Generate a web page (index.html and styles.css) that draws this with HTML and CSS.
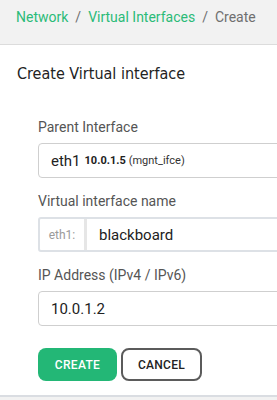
FILE: index.html
```html
<!DOCTYPE html>
<html>
<head>
	<title>Create Virtual interface</title>
	<link rel="stylesheet" href="styles.css">
</head>
<body>
	<div class="crumbs">
		<a href="#">Network</a>
		<span class="sep">/</span>
		<a href="#">Virtual Interfaces</a>
		<span class="sep">/</span>
		<span class="current">Create</span>
	</div>

	<div class="panel">
		<h2 class="title">Create Virtual interface</h2>

		<form class="form">
			<label class="label">Parent Interface</label>
			<div class="field">
				<span class="iface">eth1</span>
				<b class="addr">10.0.1.5</b>
				<span class="tag">(mgnt_ifce)</span>
			</div>

			<label class="label">Virtual interface name</label>
			<div class="group">
				<span class="addon">eth1:</span>
				<input type="text" class="group-input" value="blackboard">
			</div>

			<label class="label">IP Address (IPv4 / IPv6)</label>
			<input type="text" class="field text" value="10.0.1.2">

			<div class="buttons">
				<button type="button" class="btn btn-create">CREATE</button>
				<button type="button" class="btn btn-cancel">CANCEL</button>
			</div>
		</form>
	</div>
</body>
</html>
```

FILE: styles.css
```css
html, body {
	margin: 0;
	padding: 0;
	background: #f2f2f2;
	overflow: hidden;
	font-family: Roboto, "Liberation Sans", sans-serif;
}

.crumbs {
	height: 45px;
	padding: 0 16px 10px;
	display: flex;
	align-items: center;
	gap: 7px;
	font-size: 14px;
	border-bottom: 1px solid #dcdcdc;
	box-sizing: border-box;
	white-space: nowrap;
}

.crumbs a {
	color: #2bbb78;
	text-decoration: none;
}

.crumbs .sep,
.crumbs .current {
	color: #6f6f6f;
}

.panel {
	background: #fff;
	border-bottom: 2px solid #dadde2;
	height: 352px;
	box-sizing: border-box;
}

.title {
	margin: 0;
	padding: 19px 17px 0;
	font-family: "DejaVu Sans Condensed", sans-serif;
	font-size: 16px;
	font-weight: normal;
	color: #222;
	height: 53px;
	box-sizing: border-box;
}

.form {
	padding: 21px 0 0 38px;
	width: 300px;
}

.label {
	display: block;
	font-size: 14px;
	color: #555;
	margin-bottom: 8px;
}

.field {
	display: flex;
	align-items: center;
	gap: 4px;
	height: 35px;
	border: 1px solid #cfcfcf;
	border-radius: 4px;
	padding: 0 12px;
	margin-bottom: 15px;
	box-sizing: border-box;
	width: 300px;
	white-space: nowrap;
}

.iface {
	font-size: 15px;
	color: #222;
}

.addr {
	font-size: 11px;
	color: #222;
}

.tag {
	font-size: 11px;
	color: #333;
	margin-left: -1px;
}

.text {
	font-family: Roboto, sans-serif;
	font-size: 15px;
	color: #222;
	outline: none;
}

.group {
	display: flex;
	height: 35px;
	border: 2px solid #dde1e6;
	border-radius: 3px;
	margin-bottom: 15px;
	box-sizing: border-box;
	width: 300px;
}

.addon {
	width: 44px;
	display: flex;
	align-items: center;
	justify-content: center;
	font-size: 12px;
	color: #9a9a9a;
	border-right: 3px solid #e6e6e6;
}

.group-input {
	flex: 1;
	border: none;
	outline: none;
	padding: 0 12px;
	font-family: Roboto, sans-serif;
	font-size: 15px;
	color: #222;
}

.buttons {
	display: flex;
	gap: 4px;
	padding-top: 7px;
}

.btn {
	height: 33px;
	border-radius: 8px;
	font-family: Roboto, sans-serif;
	font-size: 12px;
	font-weight: 500;
	letter-spacing: 0.3px;
	cursor: pointer;
}

.btn-create {
	width: 79px;
	background: #23b776;
	color: #fff;
	border: none;
}

.btn-cancel {
	width: 81px;
	background: #fff;
	color: #222;
	border: 2px solid #5b5b5b;
}
```
